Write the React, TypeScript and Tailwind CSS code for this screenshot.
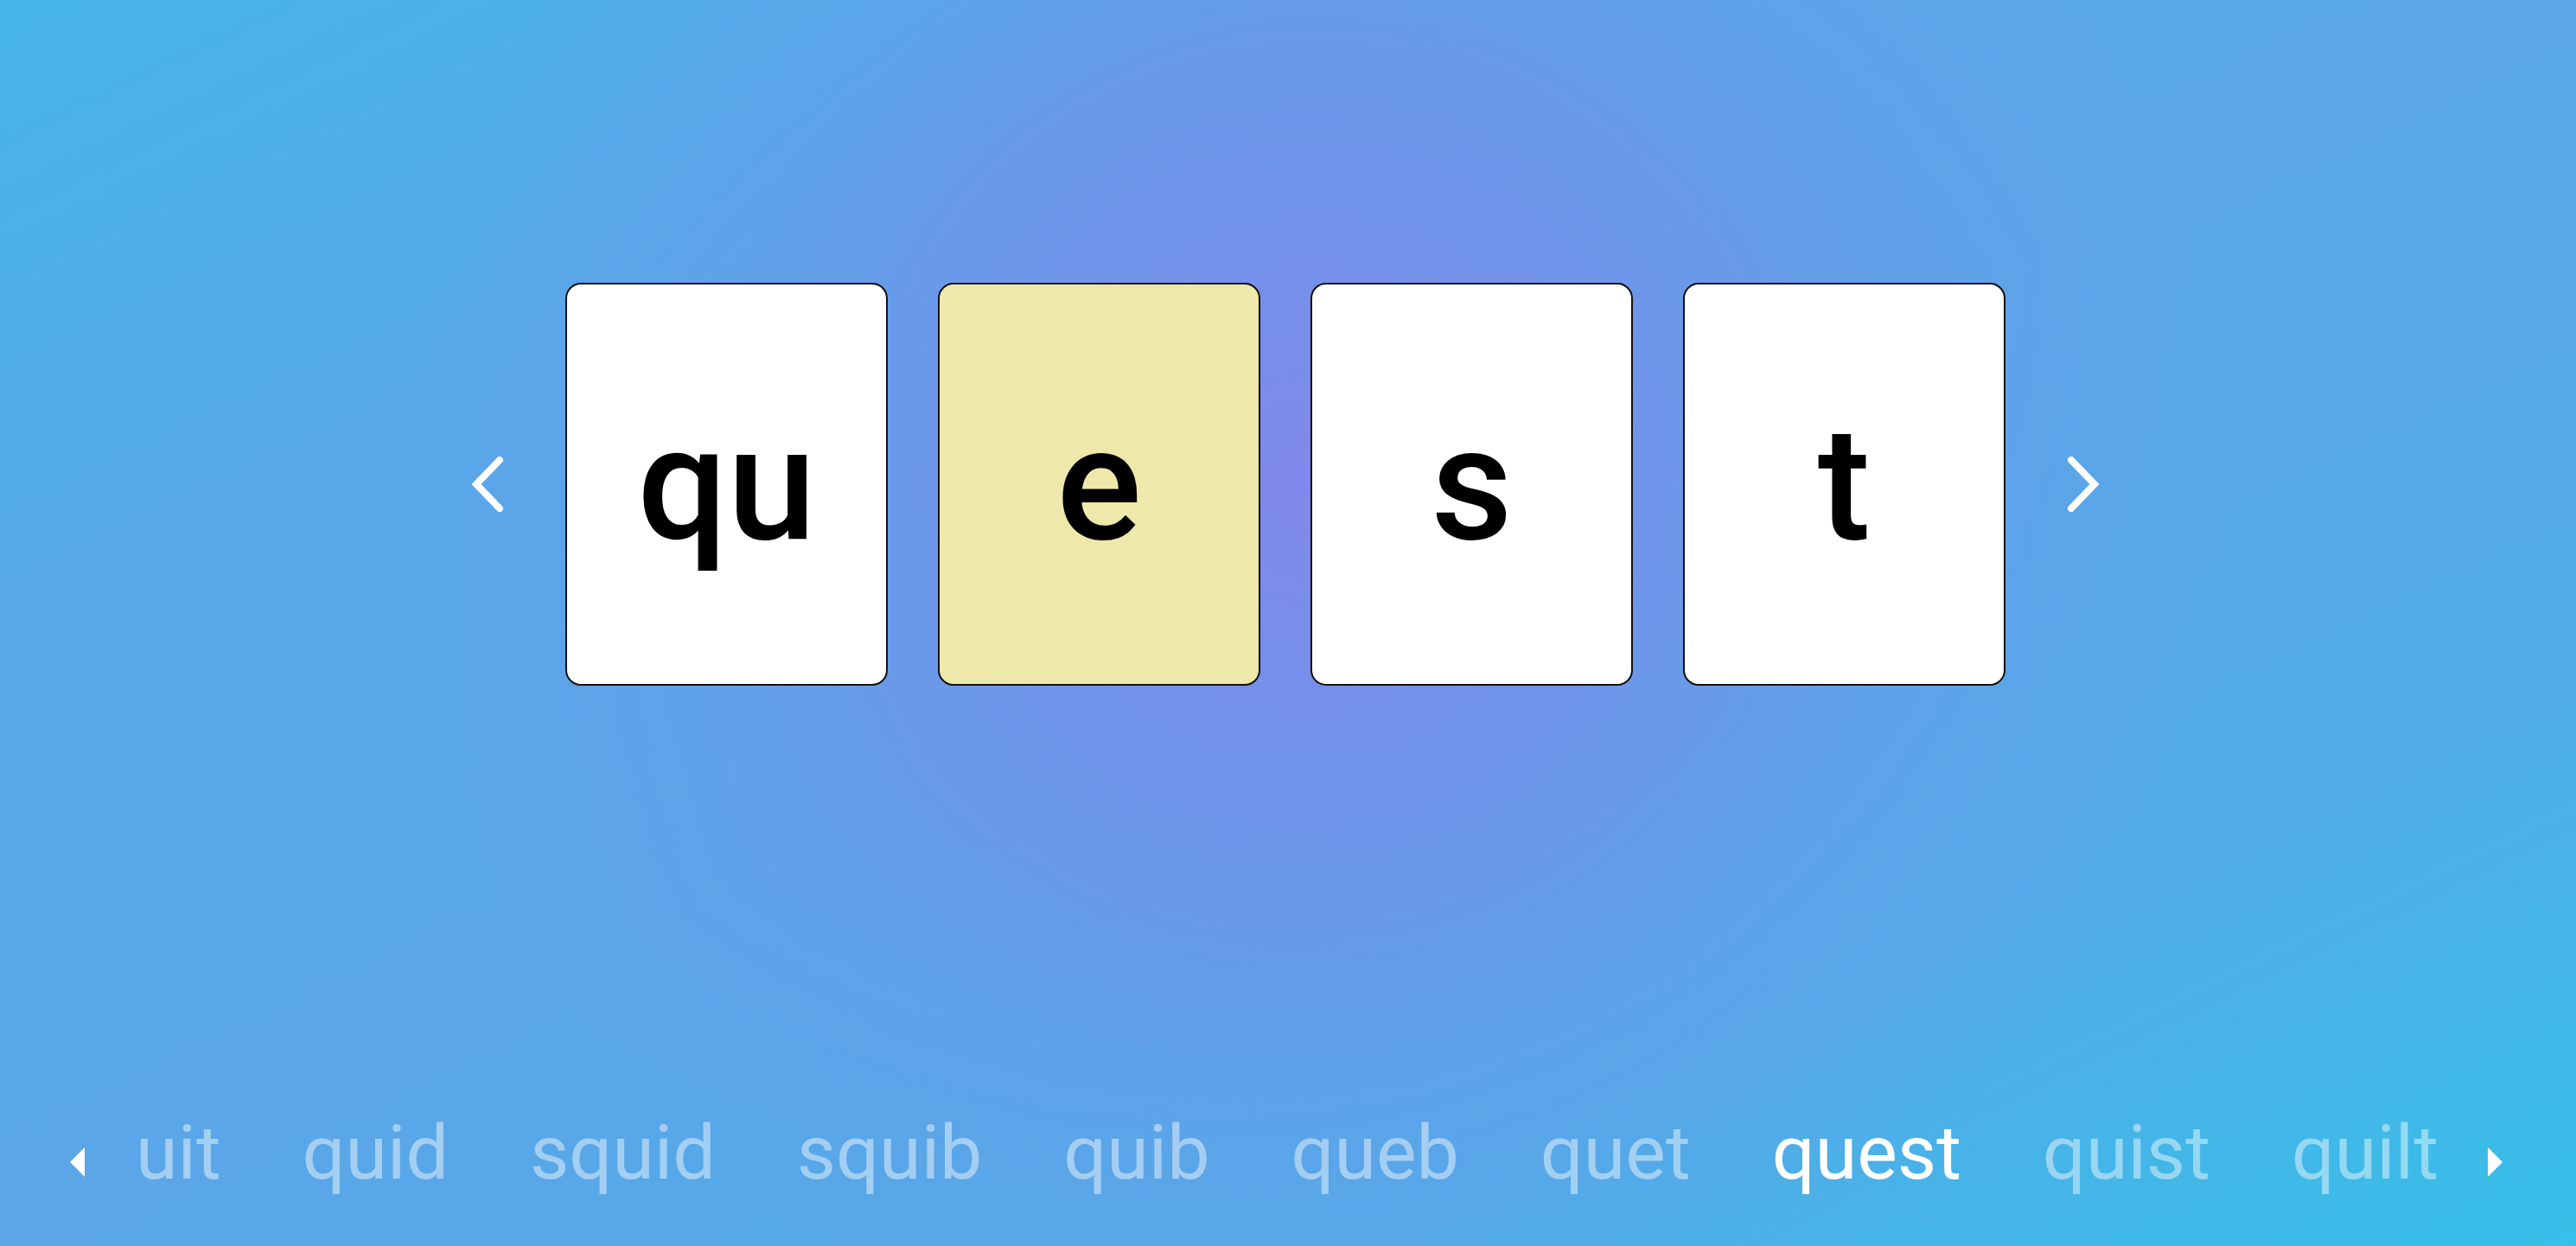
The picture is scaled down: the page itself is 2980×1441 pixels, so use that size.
import React from "react";

const letters = [
  { t: "qu", active: false },
  { t: "e", active: true },
  { t: "s", active: false },
  { t: "t", active: false },
];

const words = ["uit", "quid", "squid", "squib", "quib", "queb", "quet", "quest", "quist", "quilt"];

function Chevron({ dir }: { dir: "left" | "right" }) {
  const pts = dir === "left" ? "34,4 7,32 34,60" : "6,4 33,32 6,60";
  return (
    <svg width="40" height="64" viewBox="0 0 40 64" className="shrink-0">
      <polyline points={pts} fill="none" stroke="white" strokeWidth="8" strokeLinecap="round" strokeLinejoin="miter" />
    </svg>
  );
}

function Tri({ dir }: { dir: "left" | "right" }) {
  const pts = dir === "left" ? "17,0 0,17 17,34" : "0,0 17,17 0,34";
  return (
    <svg width="17" height="34" viewBox="0 0 17 34" className="shrink-0 mt-[22px]">
      <polygon points={pts} fill="white" />
    </svg>
  );
}

export default function App() {
  return (
    <div className="h-screen w-full overflow-hidden flex flex-col bg-[radial-gradient(circle_at_51%_39%,rgba(128,136,235,1)_0%,rgba(128,136,235,0.65)_18%,rgba(128,136,235,0.2)_40%,rgba(128,136,235,0)_60%),linear-gradient(to_bottom_right,#45b4e9_0%,#57a8e8_25%,#5aa6e8_50%,#52abe8_76%,#36c0e8_100%)]">
      <div className="pt-[327px] pr-[6px] flex items-center justify-center">
        <Chevron dir="left" />
        <div className="mx-[70px] flex gap-[58px]">
          {letters.map((l, i) => (
            <div
              key={i}
              className={`w-[373px] h-[466px] rounded-[18px] border-2 border-[#111111] flex items-center justify-center ${
                l.active ? "bg-[#eee8aa]" : "bg-white"
              }`}
            >
              <span className="text-[184px] leading-none font-medium text-black font-['Roboto',sans-serif]">{l.t}</span>
            </div>
          ))}
        </div>
        <Chevron dir="right" />
      </div>
      <div className="mt-auto pb-[55px] pl-[81px] pr-[85px] flex items-center">
        <Tri dir="left" />
        <div className="flex-1 ml-[59px] mr-[57px] flex justify-between">
          {words.map((w) => (
            <span
              key={w}
              className={`text-[88px] leading-[1.2] font-normal font-['Roboto',sans-serif] ${
                w === "quest" ? "text-white" : "text-white/45"
              }`}
            >
              {w}
            </span>
          ))}
        </div>
        <Tri dir="right" />
      </div>
    </div>
  );
}
